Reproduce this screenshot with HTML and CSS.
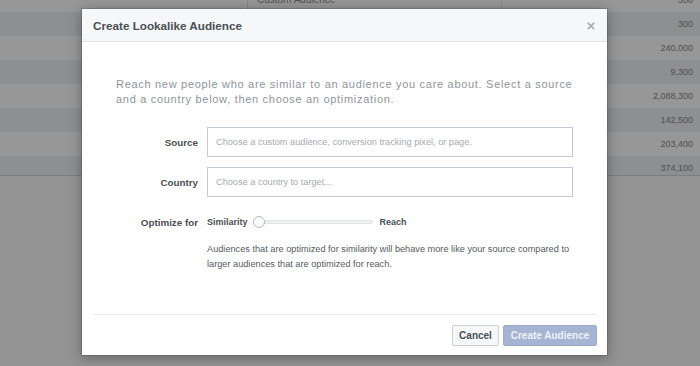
FILE: index.html
```html
<!DOCTYPE html>
<html>
<head>
<meta charset="utf-8">
<link rel="stylesheet" href="styles.css">
</head>
<body>
<div class="page">
  <div class="table">
    <div class="row light first"><div class="cell"></div><div class="cell name">Custom Audience</div><div class="cell num">300</div></div>
    <div class="row dark"><div class="cell"></div><div class="cell name"></div><div class="cell num">300</div></div>
    <div class="row light"><div class="cell"></div><div class="cell name"></div><div class="cell num">240,000</div></div>
    <div class="row dark"><div class="cell"></div><div class="cell name"></div><div class="cell num">9,300</div></div>
    <div class="row light"><div class="cell"></div><div class="cell name"></div><div class="cell num">2,088,300</div></div>
    <div class="row dark"><div class="cell"></div><div class="cell name"></div><div class="cell num">142,500</div></div>
    <div class="row light"><div class="cell"></div><div class="cell name"></div><div class="cell num">203,400</div></div>
    <div class="row dark last"><div class="cell"></div><div class="cell name"></div><div class="cell num">374,100</div></div>
  </div>

  <div class="modal">
    <div class="modal-header">
      <span class="title">Create Lookalike Audience</span>
      <svg class="close" width="8" height="8" viewBox="0 0 8 8"><path d="M0.8 0.8 L7.2 7.2 M7.2 0.8 L0.8 7.2" stroke="#a9acb2" stroke-width="1.7" fill="none"/></svg>
    </div>
    <div class="modal-body">
      <p class="desc">Reach new people who are similar to an audience you care about. Select a source<br>and a country below, then choose an optimization.</p>
      <div class="form">
        <label class="label">Source</label>
        <div class="input">Choose a custom audience, conversion tracking pixel, or page.</div>
        <label class="label">Country</label>
        <div class="input">Choose a country to target...</div>
        <label class="label opt">Optimize for</label>
        <div class="slider-row">
          <span class="end">Similarity</span>
          <div class="track"><span class="knob"></span></div>
          <span class="end">Reach</span>
        </div>
        <div></div>
        <p class="help">Audiences that are optimized for similarity will behave more like your source compared to<br>larger audiences that are optimized for reach.</p>
      </div>
    </div>
    <div class="modal-footer">
      <button class="btn cancel">Cancel</button>
      <button class="btn primary">Create Audience</button>
    </div>
  </div>
</div>
</body>
</html>
```
FILE: styles.css
```css
* { box-sizing: border-box; }
html, body { margin: 0; padding: 0; }
body {
  width: 700px;
  height: 366px;
  overflow: hidden;
  background: #939393;
  font-family: "Liberation Sans", Helvetica, Arial, sans-serif;
}
.page {
  position: relative;
  width: 700px;
  height: 366px;
  overflow: hidden;
}

.table { margin-top: -12px; border-bottom: 1px solid #7d7d7e; }
.row {
  display: grid;
  grid-template-columns: 248px 254px 198px;
  height: 24px;
}
.row.last { height: 19px; }
.row.light { background: #979797; }
.row.dark { background: #8e8f91; }
.cell { border-right: 1px solid #878787; }
.cell:last-child { border-right: none; }
.name {
  font-size: 10px;
  color: #4f4f4f;
  padding-left: 9px;
  line-height: 24px;
}
.num {
  font-size: 9px;
  color: #4f4f4f;
  text-align: right;
  padding-right: 7px;
  line-height: 24px;
}
.row.last .num { line-height: 25px; }

.modal {
  position: absolute;
  left: 82px;
  top: 9px;
  width: 525px;
  height: 346px;
  background: #fff;
  box-shadow: 0 2px 12px rgba(0,0,0,0.35), 0 0 0 1px rgba(0,0,0,0.12);
  display: flex;
  flex-direction: column;
}
.modal-header {
  height: 33px;
  background: #f6f7f9;
  border-bottom: 1px solid #e5e5e5;
  display: flex;
  align-items: center;
  justify-content: space-between;
  padding: 0 12px 0 11px;
}
.title {
  font-size: 11.7px;
  font-weight: bold;
  color: #4b4f56;
}
.close { display: block; margin-top: 1px; }

.modal-body { padding: 35px 0 0 0; }
.desc {
  margin: 0 0 20px 34px;
  font-size: 11px;
  letter-spacing: 0.7px;
  line-height: 15px;
  color: #90949c;
  white-space: nowrap;
}
.form {
  display: grid;
  grid-template-columns: 116px 366px;
  column-gap: 9px;
  row-gap: 10px;
  align-items: center;
}
.label {
  text-align: right;
  font-size: 9.8px;
  font-weight: bold;
  color: #4b4f56;
}
.label.opt { margin-top: 7px; }
.input {
  height: 30px;
  border: 1px solid #c3cbdb;
  padding-left: 8px;
  display: flex;
  align-items: center;
  font-size: 9.2px;
  color: #a7aab0;
}
.slider-row {
  display: flex;
  align-items: center;
  height: 16px;
  margin-top: 7px;
}
.end {
  font-size: 9px;
  font-weight: bold;
  color: #4b4f56;
}
.track {
  width: 115px;
  height: 4px;
  margin-left: 10px;
  margin-right: 7px;
  background: #eff0f3;
  border: 1px solid #e3e5e9;
  border-radius: 2px;
  display: flex;
  align-items: center;
}
.knob {
  width: 12px;
  height: 12px;
  border-radius: 50%;
  background: #fff;
  border: 1px solid #b5b8bd;
  margin-left: -6px;
  flex: none;
}
.help {
  margin: 2px 0 0 0;
  font-size: 9.2px;
  line-height: 15px;
  color: #555a62;
  white-space: nowrap;
}

.modal-footer {
  margin: auto 10px 0 11px;
  border-top: 1px solid #e9ebee;
  padding: 10px 0 9px 0;
  display: flex;
  justify-content: flex-end;
  gap: 4px;
}
.btn {
  height: 21px;
  font-family: inherit;
  font-size: 10px;
  font-weight: bold;
  border-radius: 2px;
  padding: 0;
  line-height: 19px;
}
.cancel {
  width: 47px;
  background: #f6f7f9;
  border: 1px solid #ced0d4;
  color: #4b4f56;
}
.primary {
  width: 94px;
  background: #a6b4d3;
  border: 1px solid #9eadcc;
  color: #eef1f8;
}
```
